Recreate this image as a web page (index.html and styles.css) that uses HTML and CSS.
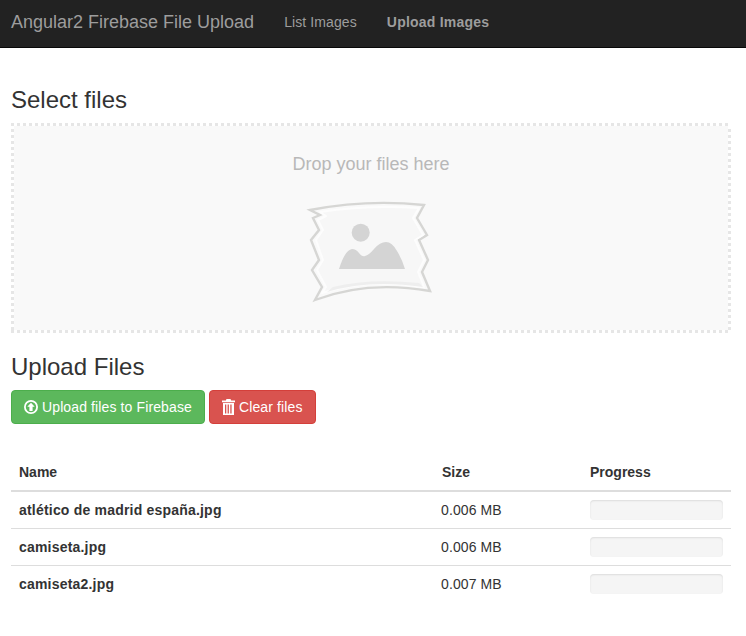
FILE: index.html
```html
<!DOCTYPE html>
<html lang="en">
<head>
<meta charset="utf-8">
<title>Angular2 Firebase File Upload</title>
<link rel="stylesheet" href="styles.css">
</head>
<body>
<nav class="navbar">
  <a class="brand" href="#">Angular2 Firebase File Upload</a>
  <ul class="nav">
    <li><a href="#">List Images</a></li>
    <li><a class="active" href="#">Upload Images</a></li>
  </ul>
</nav>
<main class="container">
  <h3 class="title-select">Select files</h3>
  <section class="dropzone">
    <h4 class="drop-text">Drop your files here</h4>
    <svg class="drop-icon" width="124" height="100" viewBox="0 0 124 100" aria-hidden="true">
      <path class="wrap-edge" d="M1 7 Q58 -4 115 2 L108 15 L118 32 L110 37 L119 57 L113 69 L121 88 Q58 77 6 97 L13 84 L3 67 L10 57 L2 37 L10 27 L4 15 L11 12 Z"/>
      <path class="wrap-inner" d="M11 9 Q58 2 110 5 L104 15 L114 32 L106 37 L115 57 L109 69 L115 84 Q58 75 13 90 L17 84 L8 67 L14 57 L7 37 L14 27 L9 17 L17 13 Z"/>
      <path class="wrap-fold" d="M18 89 Q60 76 114 84 L110 80 Q60 75 24 84 Z"/>
      <circle class="pic" cx="51.7" cy="29.7" r="9"/>
      <path class="pic" d="M30 66 Q36 47 43 46 Q47 46 50 50 Q53 54 56 53 Q60 52 65 46 Q71 39 77 39 Q83 39 88 48 Q93 56 96 66 Z"/>
    </svg>
  </section>
  <h3 class="title-upload">Upload Files</h3>
  <div class="actions">
    <button class="btn btn-success" type="button">
      <svg class="btn-icon" width="14" height="14" viewBox="0 0 14 14" aria-hidden="true">
        <path fill="#fff" fill-rule="evenodd" d="M7 0a7 7 0 1 1 0 14A7 7 0 0 1 7 0zm0 1.8a5.2 5.2 0 1 0 0 10.4A5.2 5.2 0 0 0 7 1.8zM7 2.8l3.7 3.9H8.6v4.2H5.4V6.7H3.3z"/>
      </svg>Upload files to Firebase
    </button>
    <button class="btn btn-danger" type="button">
      <svg class="btn-icon" width="13" height="16" viewBox="0 0 13 16" aria-hidden="true">
        <path fill="#fff" fill-rule="evenodd" d="M4.5 0h4l.7 1.5H13v1.7H0V1.5h3.8zM1 4h11v12H1zm2 1.5v9h1.3v-9zm2.6 0v9h1.3v-9zm2.7 0v9h1.3v-9z"/>
      </svg>Clear files
    </button>
  </div>
  <table class="files">
    <thead>
      <tr><th class="col-name">Name</th><th class="col-size">Size</th><th>Progress</th></tr>
    </thead>
    <tbody>
      <tr><td class="file">atlético de madrid españa.jpg</td><td class="size">0.006 MB</td><td><div class="progress"></div></td></tr>
      <tr><td class="file">camiseta.jpg</td><td class="size">0.006 MB</td><td><div class="progress"></div></td></tr>
      <tr><td class="file">camiseta2.jpg</td><td class="size">0.007 MB</td><td><div class="progress"></div></td></tr>
    </tbody>
  </table>
</main>
</body>
</html>
```
FILE: styles.css
```css
* { box-sizing: border-box; }
html, body { margin: 0; padding: 0; }
body {
  font-family: "Liberation Sans", Arial, sans-serif;
  font-size: 14px;
  line-height: 20px;
  color: #333;
  background: #fff;
  overflow: hidden;
}
.navbar {
  display: flex;
  align-items: center;
  height: 48px;
  padding: 0 15px 3px 11px;
  background: #222;
  border-bottom: 1px solid #080808;
}
.brand {
  font-size: 18px;
  color: #9d9d9d;
  text-decoration: none;
}
.nav {
  display: flex;
  gap: 30px;
  margin: 0 0 0 30px;
  padding: 0;
  list-style: none;
}
.nav a { color: #9d9d9d; text-decoration: none; letter-spacing: .1px; }
.nav a.active { color: #9d9d9d; font-weight: 700; letter-spacing: .22px; }
.container { padding: 0 15px 0 11px; }
h3 {
  margin: 0;
  font-size: 24px;
  font-weight: 500;
  line-height: 26px;
}
.title-select { margin-top: 39px; }
.dropzone {
  display: flex;
  flex-direction: column;
  align-items: center;
  height: 210px;
  margin-top: 10px;
  padding: 3px;
  background-color: #f9f9f9;
  background-image:
    linear-gradient(90deg, #e6e6e6 3px, #fff 3px),
    linear-gradient(90deg, #e6e6e6 3px, #fff 3px),
    linear-gradient(#e6e6e6 3px, #fff 3px),
    linear-gradient(#e6e6e6 3px, #fff 3px);
  background-size: 6px 3px, 6px 3px, 3px 6px, 3px 6px;
  background-position: 0 0, 0 100%, 0 0, 100% 0;
  background-repeat: repeat-x, repeat-x, repeat-y, repeat-y;
}
.drop-text {
  margin: 28px 0 0;
  font-size: 18px;
  font-weight: 500;
  line-height: 20px;
  color: #b8b8b8;
}
.drop-icon { margin-top: 29px; overflow: visible; }
.wrap-edge { fill: #f9f9f9; stroke: #d6d6d4; stroke-width: 2.4; stroke-linejoin: miter; }
.wrap-inner { fill: #f7f7f7; stroke: #fdfdfd; stroke-width: 2; stroke-linejoin: round; }
.wrap-fold { fill: #eeeeee; }
.pic { fill: #d4d4d4; }
.title-upload { margin-top: 21px; }
.actions { display: flex; gap: 4px; margin-top: 10px; }
.btn {
  display: inline-flex;
  align-items: center;
  height: 34px;
  padding: 0 12px;
  font: inherit;
  letter-spacing: .12px;
  color: #fff;
  border: 1px solid;
  border-radius: 4px;
}
.btn-success { background: #5cb85c; border-color: #4cae4c; }
.btn-danger { background: #d9534f; border-color: #d43f3a; }
.btn-icon { margin-right: 4px; flex: none; }
.files {
  width: 720px;
  margin-top: 30px;
  border-collapse: collapse;
  table-layout: fixed;
}
.col-name { width: 423px; }
.col-size { width: 148px; }
th {
  padding: 8px;
  text-align: left;
  font-weight: 700;
  border-bottom: 2px solid #ddd;
}
td {
  height: 37px;
  padding: 8px;
  vertical-align: top;
  border-top: 1px solid #ddd;
}
thead + tbody tr:first-child td { border-top: 0; }
.file { font-weight: 700; letter-spacing: .2px; }
.size { padding-left: 7px; letter-spacing: .1px; }
.progress {
  width: 133px;
  height: 20px;
  background: #f5f5f5;
  border-radius: 4px;
  box-shadow: inset 0 1px 2px rgba(0, 0, 0, .1);
}
```
